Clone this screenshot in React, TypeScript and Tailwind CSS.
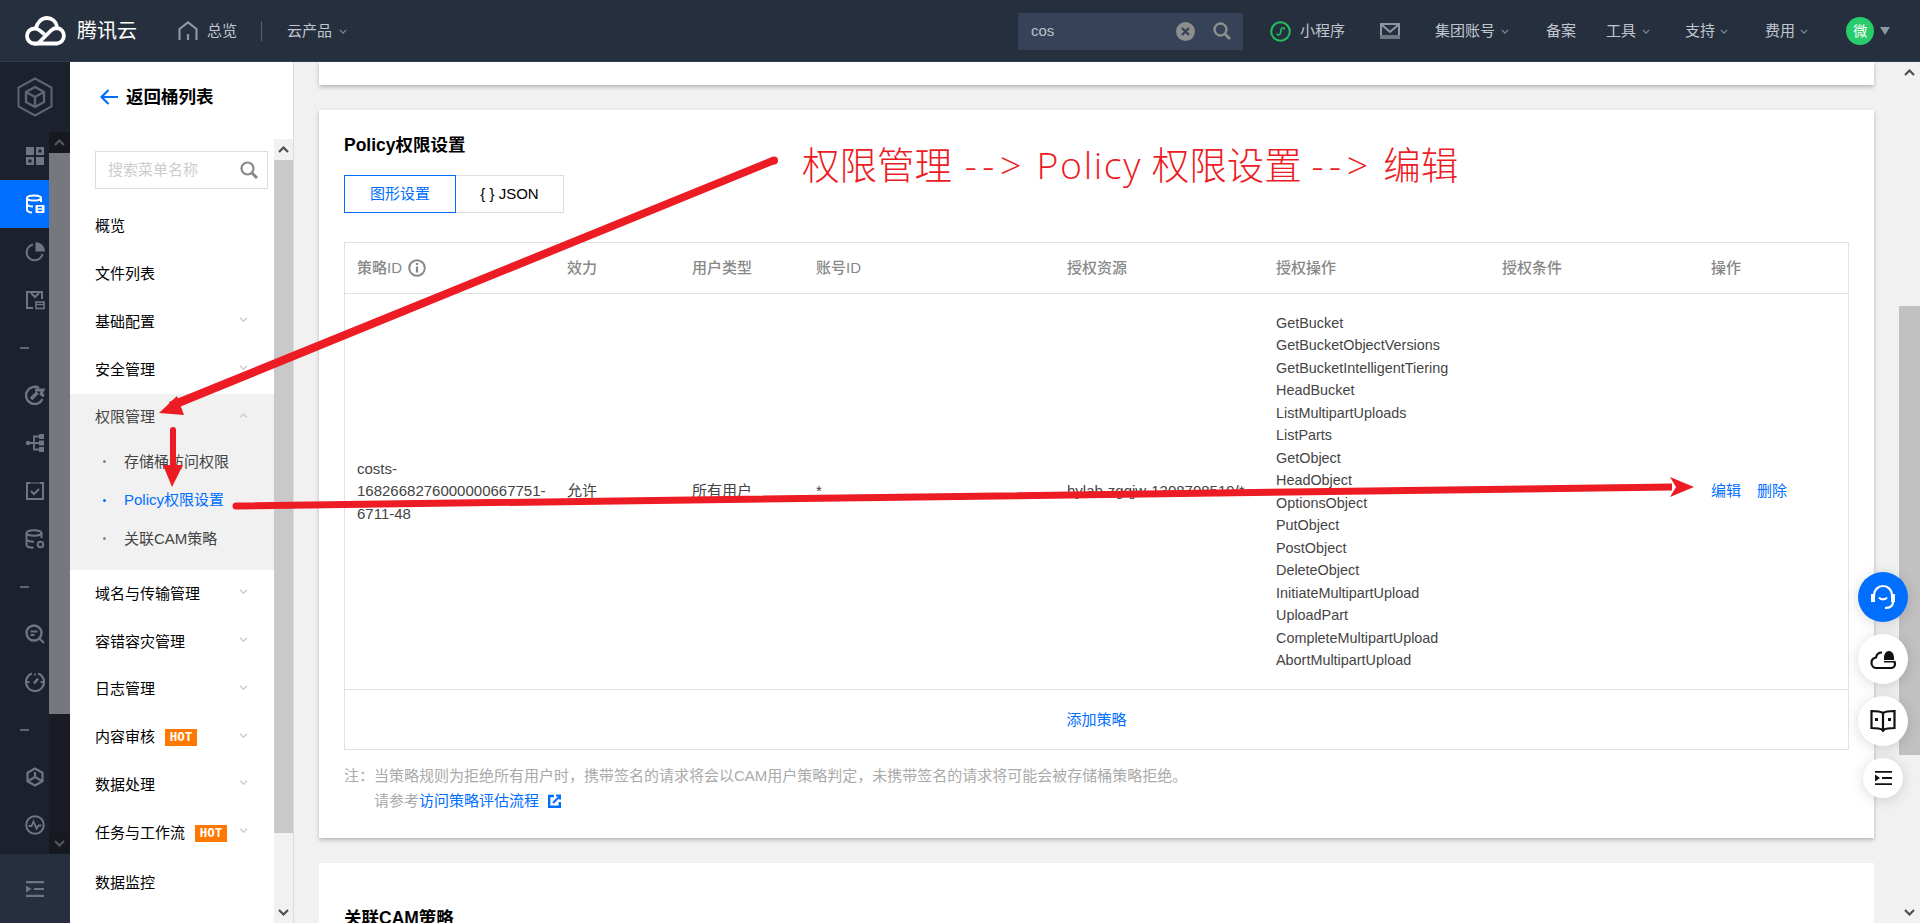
import type { ReactNode } from "react";

const actions = [
  "GetBucket",
  "GetBucketObjectVersions",
  "GetBucketIntelligentTiering",
  "HeadBucket",
  "ListMultipartUploads",
  "ListParts",
  "GetObject",
  "HeadObject",
  "OptionsObject",
  "PutObject",
  "PostObject",
  "DeleteObject",
  "InitiateMultipartUpload",
  "UploadPart",
  "CompleteMultipartUpload",
  "AbortMultipartUpload",
];

function Chevron({ up = false, className = "" }: { up?: boolean; className?: string }) {
  return (
    <svg width="10" height="6" viewBox="0 0 10 6" fill="none" stroke="currentColor" strokeWidth="1.6" className={className}>
      <path d={up ? "M1 5l4-4 4 4" : "M1 1l4 4 4-4"} />
    </svg>
  );
}

function BarArrow({ up = false, className = "" }: { up?: boolean; className?: string }) {
  return (
    <svg width="11" height="7" viewBox="0 0 11 7" fill="none" stroke="currentColor" strokeWidth="2.2" className={className}>
      <path d={up ? "M1 6l4.5-4.5L10 6" : "M1 1l4.5 4.5L10 1"} />
    </svg>
  );
}

function Ico({ children, size = 20 }: { children: ReactNode; size?: number }) {
  return (
    <svg width={size} height={size} viewBox="0 0 20 20" fill="none" stroke="currentColor" strokeWidth="2">
      {children}
    </svg>
  );
}

const railIcons: Record<string, ReactNode> = {
  grid: (
    <Ico>
      <path fill="currentColor" stroke="none" d="M1 1h8v8H1zM11 11h8v8h-8z" />
      <path fill="currentColor" stroke="none" fillRule="evenodd" d="M11 1h8v8h-8zM13.500 3.500v3h3v-3zM1 11h8v8H1zM3.500 13.500v3h3v-3z" />
    </Ico>
  ),
  db: (
    <Ico>
      <ellipse cx="9" cy="4" rx="7" ry="2.600" />
      <path d="M2 4v12c0 1.500 3 2.600 5 2.600M16 4v4M2 10c0 1.500 3 2.600 6 2.600" />
      <rect x="10.500" y="11" width="9" height="8" rx="1" fill="currentColor" stroke="none" />
      <path d="M13 13.500h4M13 16.500h4" stroke="#006eff" strokeWidth="1.400" />
    </Ico>
  ),
  pie: (
    <Ico>
      <path d="M8 2.500a8 8 0 1 0 9.500 9.500" />
      <path fill="currentColor" stroke="none" d="M10.500 0a9.500 9.500 0 0 1 9.500 9.500h-9.500z" />
    </Ico>
  ),
  box: (
    <Ico>
      <path d="M8 18H2V2h15v7" />
      <path d="M6 3l4 4 4-4" />
      <rect x="11" y="12" width="8" height="6.500" strokeWidth="1.600" />
      <path d="M11 14.500h8" strokeWidth="1.400" />
    </Ico>
  ),
  wrench: (
    <Ico>
      <path d="M14 3A8.600 8.600 0 1 0 17.500 14" strokeWidth="2.400" />
      <path d="M6 14l6.500-6.500" strokeWidth="3.600" />
      <path d="M10 5h8l-2 4 3 2" strokeWidth="2.800" />
    </Ico>
  ),
  usb: (
    <Ico>
      <circle cx="3" cy="10" r="2.200" fill="currentColor" stroke="none" />
      <path d="M3 10h13M9 10V3.500h5M9 10v6.500h5" strokeWidth="1.800" />
      <path fill="currentColor" stroke="none" d="M14 1h5v5h-5zM14 7.500h5v5h-5zM14 14h5v5h-5z" />
    </Ico>
  ),
  check: (
    <Ico>
      <path d="M5 2H2v16h16V2h-3" />
      <path d="M5 2h10" strokeWidth="1" />
      <path d="M6 10l3 3 5-5" />
    </Ico>
  ),
  dbGear: (
    <Ico>
      <ellipse cx="9" cy="4" rx="7.500" ry="2.800" />
      <path d="M1.500 4v12c0 1.500 3 2.800 7 2.800M16.500 4v5M1.500 10c0 1.500 3 2.800 7.500 2.800" />
      <circle cx="15.500" cy="15.500" r="2.800" />
    </Ico>
  ),
  search: (
    <Ico>
      <circle cx="9" cy="9" r="7.500" strokeWidth="2.400" />
      <path d="M5.500 7.500h7M5.500 11h4M14.500 14.500l4.500 4.500" />
    </Ico>
  ),
  gauge: (
    <Ico>
      <path d="M7 1.500A9 9 0 1 0 13 1.500" strokeWidth="2.200" />
      <path d="M10 1.500v2M1.500 10h3M15.500 10h3" strokeWidth="1.800" />
      <path d="M9 11.500l4-5" strokeWidth="2.600" />
    </Ico>
  ),
  cube: (
    <Ico>
      <path strokeLinejoin="round" d="M10 1.500l7.500 4.300v8.400L10 18.500l-7.500-4.300V5.800z" strokeWidth="2.200" />
      <path d="M3 14l7-4 7 4M10 10V5" strokeWidth="2.200" />
    </Ico>
  ),
  pulse: (
    <Ico>
      <circle cx="10" cy="10" r="8.800" />
      <path d="M3.500 11h3l2-4.500 3 7 2-3h3" strokeWidth="1.800" />
    </Ico>
  ),
};

function RailRow({ icon }: { icon: string }) {
  return (
    <div className="flex h-[48px] items-center pl-[25px] text-[#6d7681]">{railIcons[icon]}</div>
  );
}

function RailDash() {
  return (
    <div className="flex h-[47px] items-center pl-[20px]">
      <div className="h-[2px] w-[9px] bg-[#5d6671]" />
    </div>
  );
}

function Rail() {
  return (
    <div className="flex w-[70px] shrink-0 flex-col bg-[#1c212d]">
      <div className="flex h-[70px] items-center justify-center text-[#5d6671]">
        <svg width="36" height="40" viewBox="0 0 36 40" fill="none" stroke="currentColor" strokeWidth="2">
          <path d="M18 1.500L34.500 10.500V29.500L18 38.500L1.500 29.500V10.500L18 1.500Z" />
          <path d="M18 10l9 5v10l-9 5-9-5V15z" strokeWidth="2.400" />
          <path d="M9 15l9 5 9-5M18 20v10" strokeWidth="2.400" />
        </svg>
      </div>
      <div className="flex h-[722px]">
        <div className="w-[49px] overflow-hidden">
          <RailRow icon="grid" />
          <div className="flex h-[48px] items-center bg-[#006eff] pl-[25px] text-white">{railIcons.db}</div>
          <RailRow icon="pie" />
          <RailRow icon="box" />
          <RailDash />
          <RailRow icon="wrench" />
          <RailRow icon="usb" />
          <RailRow icon="check" />
          <RailRow icon="dbGear" />
          <RailDash />
          <RailRow icon="search" />
          <RailRow icon="gauge" />
          <RailDash />
          <RailRow icon="cube" />
          <RailRow icon="pulse" />
        </div>
        <div className="flex w-[21px] flex-col bg-[#191c25]">
          <div className="flex h-[21px] items-center justify-center bg-[#16191f] text-[#55585e]">
            <BarArrow up />
          </div>
          <div className="h-[561px] bg-[#77787e]" />
          <div className="flex-1" />
          <div className="flex h-[21px] items-center justify-center bg-[#16191f] text-[#55585e]">
            <BarArrow />
          </div>
        </div>
      </div>
      <div className="flex flex-1 items-center justify-center bg-[#262f3e] text-[#6d7681]">
        <svg width="18" height="16" viewBox="0 0 18 16" fill="currentColor">
          <path d="M0 0h18v2.200H0zM0 13.800h18V16H0zM8 6.900h10v2.200H8zM0 4.500l5.500 3.500L0 11.500z" />
        </svg>
      </div>
    </div>
  );
}

function Hot() {
  return (
    <span className="ml-[10px] flex h-[17px] w-[32px] items-center justify-center bg-[#ff7800] font-['DejaVu_Sans_Mono',monospace] text-[12.500px] font-bold text-white">
      HOT
    </span>
  );
}

function MenuItem({ label, hot, arrow = true, className = "h-[47.800px]" }: { label: string; hot?: boolean; arrow?: boolean; className?: string }) {
  return (
    <div className={`relative flex items-center pl-[25px] text-black ${className}`}>
      <span>{label}</span>
      {hot && <Hot />}
      {arrow && <Chevron className="absolute left-[169px] top-[19px] h-[5px] w-[9px] text-[#c9c9c9]" />}
    </div>
  );
}

function Menu() {
  return (
    <div className="flex w-[224px] shrink-0 border-r border-[#dcdcdc] bg-white">
      <div className="w-[204px]">
        <div className="flex h-[70px] items-center pl-[30px] text-[17.500px] font-bold text-black">
          <svg width="18" height="16" viewBox="0 0 18 16" fill="none" stroke="#006eff" strokeWidth="2.200" className="mr-[8px]">
            <path d="M8.500 1L1.500 8l7 7M1.500 8H18" />
          </svg>
          返回桶列表
        </div>
        <div className="ml-[25px] mt-[19px] flex h-[38px] w-[173px] items-center justify-between border border-[#dddddd] pl-[12px] pr-[9px] text-[15px] text-[#cccccc]">
          搜索菜单名称
          <svg width="18" height="18" viewBox="0 0 18 18" fill="none" stroke="#888888" strokeWidth="2.200">
            <circle cx="7.500" cy="7.500" r="6" />
            <path d="M12 12l5 5" strokeWidth="3" />
          </svg>
        </div>
        <div className="mt-[13.500px] text-[15px]">
          <MenuItem label="概览" arrow={false} />
          <MenuItem label="文件列表" arrow={false} />
          <MenuItem label="基础配置" />
          <MenuItem label="安全管理" />
          <div className="h-[176.500px] bg-[#f1f1f1]">
            <div className="relative flex h-[47px] items-center pl-[25px] text-[#444444]">
              权限管理
              <Chevron up className="absolute left-[169px] top-[19px] h-[5px] w-[9px] text-[#c9c9c9]" />
            </div>
            <div className="pt-[2px]">
              <div className="flex h-[38.500px] items-center pl-[33px] text-[#444444]">
                <span className="mr-[18px] h-[3px] w-[3px] rounded-full bg-[#888888]" />
                存储桶访问权限
              </div>
              <div className="flex h-[38.500px] items-center pl-[33px] text-[#006eff]">
                <span className="mr-[18px] h-[3px] w-[3px] rounded-full bg-[#006eff]" />
                Policy权限设置
              </div>
              <div className="flex h-[38.500px] items-center pl-[33px] text-[#444444]">
                <span className="mr-[18px] h-[3px] w-[3px] rounded-full bg-[#888888]" />
                关联CAM策略
              </div>
            </div>
          </div>
          <MenuItem label="域名与传输管理" />
          <MenuItem label="容错容灾管理" />
          <MenuItem label="日志管理" />
          <MenuItem label="内容审核" hot />
          <MenuItem label="数据处理" />
          <MenuItem label="任务与工作流" hot />
          <MenuItem label="数据监控" arrow={false} className="mt-[2px] h-[48px]" />
        </div>
      </div>
      <div className="flex w-[19px] flex-col pt-[77px]">
        <div className="flex h-[21px] items-center justify-center bg-[#f1f1f1] text-[#505050]">
          <BarArrow up />
        </div>
        <div className="h-[673px] bg-[#c9c9c9]" />
        <div className="flex flex-1 items-end justify-center bg-[#f1f1f1] pb-[7px] text-[#505050]">
          <BarArrow />
        </div>
      </div>
    </div>
  );
}

function Header() {
  const chev = "h-[5px] w-[8px] text-[#7f8895]";
  return (
    <div className="flex h-[62px] items-center border-b border-[#2f3c50] bg-[#262f3e] pt-px text-[15px] text-[#c0c6ce]">
      <svg width="42" height="30" viewBox="0 0 42 30" fill="none" stroke="white" strokeWidth="3.800" className="ml-[25px]">
        <path d="M13 27.500H9.500a7.500 7.500 0 0 1 0-15c1 0 2 .2 3 .6 3 1.400 5 3.500 7 5.400M11 12.500C12 6.500 16.500 2 22 2c5 0 9 3.500 10 8.500" />
        <path d="M13 27.500L26 14.500c1.500-1.500 3.500-2.500 6-2.500a7.800 7.800 0 0 1 0 15.500H13z" />
      </svg>
      <span className="ml-[10px] w-[61px] text-[20px] whitespace-nowrap text-white">腾讯云</span>
      <svg width="20" height="20" viewBox="0 0 20 20" fill="none" stroke="#8d96a3" strokeWidth="2.200" className="ml-[40px]">
        <path d="M1.500 19V8L10 1.500 18.500 8v11M10 13v6" />
      </svg>
      <span className="ml-[9px]">总览</span>
      <div className="ml-[24px] h-[20px] w-px bg-[#566070]" />
      <span className="ml-[25px]">云产品</span>
      <Chevron className={`ml-[7px] ${chev}`} />
      <div className="ml-[671px] flex h-[37px] w-[225px] items-center justify-between bg-[#364258] pl-[13px] pr-[12px] text-[#b8c0cc]">
        cos
        <div className="flex items-center gap-[18px]">
          <svg width="19" height="19" viewBox="0 0 19 19">
            <circle cx="9.500" cy="9.500" r="9.500" fill="#8e8e8e" />
            <path d="M6 6l7 7M13 6l-7 7" stroke="#364258" strokeWidth="2.400" />
          </svg>
          <svg width="18" height="18" viewBox="0 0 18 18" fill="none" stroke="#8e8e8e" strokeWidth="2.400">
            <circle cx="7.500" cy="7.500" r="6" />
            <path d="M12 12l5 5" strokeWidth="3" />
          </svg>
        </div>
      </div>
      <svg width="21" height="21" viewBox="0 0 21 21" fill="none" stroke="#1fc05f" strokeWidth="2" className="ml-[27px]">
        <circle cx="10.500" cy="10.500" r="9.300" />
        <path d="M7 12.500c0 2 2.800 2 3.300 0l1-4.500c.5-2 3.200-1.500 3 .5" strokeWidth="1.600" />
      </svg>
      <span className="ml-[9px] whitespace-nowrap">小程序</span>
      <svg width="20" height="16" viewBox="0 0 20 16" className="ml-[35px]">
        <rect x="1" y="1" width="18" height="14" fill="none" stroke="#8d96a3" strokeWidth="2" />
        <path d="M2 2l8 7 8-7" fill="none" stroke="#8d96a3" strokeWidth="2" />
        <path d="M0 12h20v4H0z" fill="#6d7681" />
      </svg>
      <span className="ml-[35px] whitespace-nowrap">集团账号</span>
      <Chevron className={`ml-[6px] ${chev}`} />
      <span className="ml-[37px] whitespace-nowrap">备案</span>
      <span className="ml-[30px] whitespace-nowrap">工具</span>
      <Chevron className={`ml-[6px] ${chev}`} />
      <span className="ml-[35px] whitespace-nowrap">支持</span>
      <Chevron className={`ml-[5px] ${chev}`} />
      <span className="ml-[37px] whitespace-nowrap">费用</span>
      <Chevron className={`ml-[5px] ${chev}`} />
      <div className="ml-[38px] flex h-[28px] w-[28px] items-center justify-center rounded-full bg-[#29cc6a] text-[14px] text-white">
        微
      </div>
      <span className="ml-[6px] h-0 w-0 border-x-[5px] border-t-[8px] border-x-transparent border-t-[#8d96a3]" />
    </div>
  );
}

function PolicyTable() {
  return (
    <div className="mt-[29px] border border-[#e2e2e2] text-[15px]">
      <div className="grid h-[51px] grid-cols-[210px_125px_124px_251px_209px_226px_209px_1fr] items-center border-b border-[#e2e2e2] font-medium text-[#888888]">
        <div className="flex items-center pl-[12px]">
          策略ID
          <svg width="18" height="18" viewBox="0 0 18 18" fill="none" stroke="#888888" strokeWidth="2" className="ml-[6px]">
            <circle cx="9" cy="9" r="7.800" />
            <path d="M9 7.500V13.500" strokeWidth="2.200" />
            <path d="M9 4v2" strokeWidth="2.200" />
          </svg>
        </div>
        <div className="pl-[12px]">效力</div>
        <div className="pl-[12px]">用户类型</div>
        <div className="pl-[12px]">账号ID</div>
        <div className="pl-[12px]">授权资源</div>
        <div className="pl-[12px]">授权操作</div>
        <div className="pl-[12px]">授权条件</div>
        <div className="pl-[12px]">操作</div>
      </div>
      <div className="grid h-[396px] grid-cols-[210px_125px_124px_251px_209px_226px_209px_1fr] items-center border-b border-[#e2e2e2] leading-[22.500px] text-[#444444]">
        <div className="pl-[12px]">costs-1682668276000000667751-6711-48</div>
        <div className="pl-[12px]">允许</div>
        <div className="pl-[12px]">所有用户</div>
        <div className="pl-[12px]">*</div>
        <div className="pl-[12px]">hylab-zgqjw-1308708519/*</div>
        <div className="pl-[12px] text-[14.400px]">
          {actions.map((a) => (
            <div key={a}>{a}</div>
          ))}
        </div>
        <div className="pl-[12px]">-</div>
        <div className="flex gap-[16px] pl-[12px] text-[#006eff]">
          <span>编辑</span>
          <span>删除</span>
        </div>
      </div>
      <div className="flex h-[59px] items-center justify-center pt-[2px] text-[#006eff]">添加策略</div>
    </div>
  );
}

function Main() {
  return (
    <div className="flex flex-1 bg-[#f1f1f1]">
      <div className="ml-[25px] flex w-[1555px] flex-col">
        <div className="h-[23px] shrink-0 bg-white shadow-[0_2px_4px_rgba(0,0,0,0.25)]" />
        <div className="mt-[25px] h-[728px] shrink-0 bg-white px-[25px] pt-[24px] shadow-[0_2px_4px_rgba(0,0,0,0.25)]">
          <div className="text-[17.500px] leading-[22px] font-bold text-black">Policy权限设置</div>
          <div className="mt-[19px] flex text-[15px]">
            <div className="flex h-[38px] w-[112px] items-center justify-center border border-[#006eff] text-[#006eff]">图形设置</div>
            <div className="flex h-[38px] w-[108px] items-center justify-center border border-l-0 border-[#dddddd] text-black">{"{ } JSON"}</div>
          </div>
          <PolicyTable />
          <div className="mt-[16px] flex text-[15px] leading-[20px] text-[#aaaaaa]">
            <span className="w-[30px]">注：</span>
            <div>
              <div>当策略规则为拒绝所有用户时，携带签名的请求将会以CAM用户策略判定，未携带签名的请求将可能会被存储桶策略拒绝。</div>
              <div className="mt-[5px] flex items-center">
                请参考<span className="text-[#006eff]">访问策略评估流程</span>
                <svg width="13" height="14" viewBox="0 0 13 14" fill="none" stroke="#006eff" className="ml-[9px]">
                  <path d="M6 2H1.200v10.800h10.600V8" strokeWidth="2.400" />
                  <path d="M5 9l6-6M8 1.500h4v4" strokeWidth="2" />
                </svg>
              </div>
            </div>
          </div>
        </div>
        <div className="mt-[25px] flex-1 bg-white pl-[25px] pt-[44px]">
          <div className="text-[17.500px] leading-[22px] font-bold text-black">关联CAM策略</div>
        </div>
      </div>
      <div className="w-[25px] shrink-0" />
      <div className="flex w-[21px] shrink-0 flex-col">
        <div className="flex h-[21px] items-center justify-center text-[#505050]">
          <BarArrow up />
        </div>
        <div className="mt-[223px] h-[449px] bg-[#c1c1c1]" />
        <div className="flex flex-1 items-end justify-center pb-[7px] text-[#505050]">
          <BarArrow />
        </div>
      </div>
    </div>
  );
}

function FloatButtons() {
  const round = "flex h-[50px] w-[50px] items-center justify-center rounded-full shadow-[0_2px_14px_rgba(0,0,0,0.15)]";
  return (
    <div className="absolute right-[12px] top-[572px] flex flex-col items-center gap-[12px]">
      <div className={`${round} bg-[#006eff]`}>
        <svg width="26" height="26" viewBox="0 0 26 26" fill="none" stroke="white" strokeWidth="2.200">
          <path d="M4 13V11a9 9 0 0 1 18 0v2" />
          <path fill="white" stroke="none" d="M1 10h4v8H1zM21 10h4v8h-4z" />
          <path d="M9 13.500c1.500 2.500 6.500 2.500 8 0M23 18c0 4-3 6-8 6" />
        </svg>
      </div>
      <div className={`${round} bg-white`}>
        <svg width="26" height="24" viewBox="0 0 26 24" fill="none" stroke="#111111" strokeWidth="2.200">
          <path d="M12 5.500C9 5.500 6.500 7.500 6 10.500 3 11 1.500 13.500 1.500 16c0 3 2.500 5 5 5H21c2.500 0 4-2 4-4 0-1-.4-2-1-2.700" />
          <path fill="#111111" stroke="none" d="M14 11c0-4 2-7 5-7s5 3 5 7v2H14zM14 14h10v1.500H14z" />
        </svg>
      </div>
      <div className={`${round} bg-white`}>
        <svg width="26" height="24" viewBox="0 0 26 24" fill="none" stroke="#111111" strokeWidth="2.200">
          <path d="M13 4C10 2 5 2 1.500 2v17c3.500 0 8 0 11.500 2 3.500-2 8-2 11.500-2V2C21 2 16 2 13 4zM13 4v17" />
          <path fill="#111111" stroke="none" d="M5 9h3v3H5zM18 9h3v3h-3zM11 21h4l-2 2.500z" />
        </svg>
      </div>
      <div className="flex h-[40px] w-[40px] items-center justify-center rounded-full bg-white shadow-[0_2px_14px_rgba(0,0,0,0.15)]">
        <svg width="17" height="14" viewBox="0 0 17 14" fill="#111111">
          <path d="M0 0h17v1.800H0zM0 12.200h17V14H0zM7 6.100h10v1.800H7zM0 3.500L5 7l-5 3.500z" />
        </svg>
      </div>
    </div>
  );
}

function Annotations() {
  return (
    <>
      <svg width="1920" height="923" className="pointer-events-none absolute left-0 top-0">
        <g fill="#ed1c24">
          <path d="M772 157L775 164L172 410L169 402Z" />
          <circle cx="774" cy="160.500" r="4" />
          <path d="M159 413L177 396L184 415Z" />
          <path d="M170 430a3 3 0 0 1 6 0L176 470L170 470Z" />
          <path d="M172 487L163 465L183 465Z" />
          <path d="M236 502.500L1672 483.500L1672 490.500L236 509.500a3.500 3.500 0 0 1 0-7Z" />
          <path d="M1694 487L1670 477L1676 487L1670 497Z" />
        </g>
      </svg>
      <div className="absolute left-[802px] top-[139px] whitespace-nowrap font-['Open_Sans','Noto_Sans_CJK_SC',sans-serif] text-[37.500px] leading-[52px] font-light text-[#ed1c24]">
        权限管理 <span className="ml-[3px] tracking-[5.500px]">--&gt;</span> <span className="tracking-[1.600px]">Policy</span> 权限设置 <span className="tracking-[5.500px]">--&gt;</span> 编辑
      </div>
    </>
  );
}

export default function App() {
  return (
    <div className="relative h-[923px] w-[1920px] overflow-hidden font-['Liberation_Sans','Noto_Sans_CJK_SC',sans-serif]">
      <Header />
      <div className="flex h-[861px]">
        <Rail />
        <Menu />
        <Main />
      </div>
      <FloatButtons />
      <Annotations />
    </div>
  );
}
